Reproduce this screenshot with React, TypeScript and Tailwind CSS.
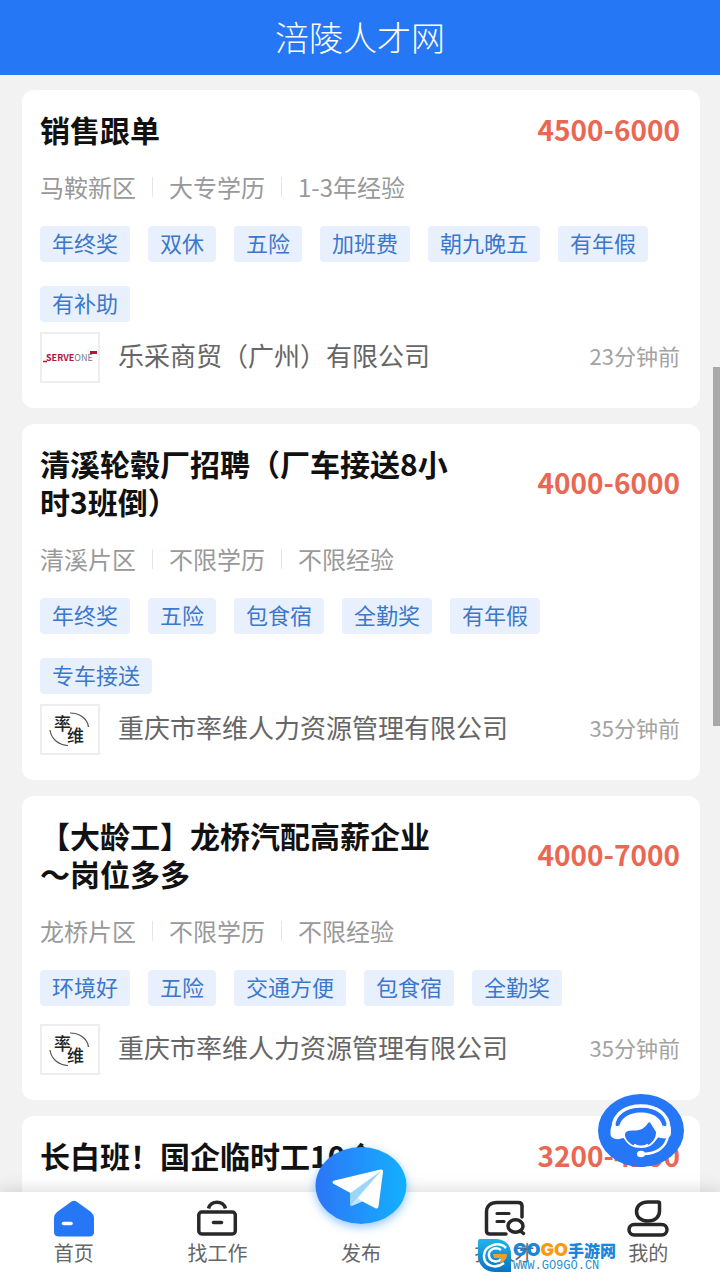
import type { ReactNode } from 'react';

interface Job {
  title: string;
  salary: string;
  meta: string[];
  tags: string[];
  company?: string;
  logo?: 'serveone' | 'shuaiwei';
  time?: string;
}

const jobs: Job[] = [
  {
    title: '销售跟单',
    salary: '4500-6000',
    meta: ['马鞍新区', '大专学历', '1-3年经验'],
    tags: ['年终奖', '双休', '五险', '加班费', '朝九晚五', '有年假', '有补助'],
    company: '乐采商贸（广州）有限公司',
    logo: 'serveone',
    time: '23分钟前',
  },
  {
    title: '清溪轮毂厂招聘（厂车接送8小时3班倒）',
    salary: '4000-6000',
    meta: ['清溪片区', '不限学历', '不限经验'],
    tags: ['年终奖', '五险', '包食宿', '全勤奖', '有年假', '专车接送'],
    company: '重庆市率维人力资源管理有限公司',
    logo: 'shuaiwei',
    time: '35分钟前',
  },
  {
    title: '【大龄工】龙桥汽配高薪企业～岗位多多',
    salary: '4000-7000',
    meta: ['龙桥片区', '不限学历', '不限经验'],
    tags: ['环境好', '五险', '交通方便', '包食宿', '全勤奖'],
    company: '重庆市率维人力资源管理有限公司',
    logo: 'shuaiwei',
    time: '35分钟前',
  },
  {
    title: '长白班！国企临时工10个',
    salary: '3200-4200',
    meta: [],
    tags: [],
  },
];

function ServeOneLogo() {
  return (
    <svg viewBox="0 0 56 47" className="h-full w-full" role="img" aria-label="SERVEONE">
      <path d="M1 27.500H5" fill="none" stroke="#b5123e" strokeWidth="1.500" />
      <text x="4" y="27" fontSize="9" fontFamily="Noto Sans CJK SC, sans-serif">
        <tspan fill="#b5123e" fontWeight="700">SERVE</tspan>
        <tspan fill="#777">ONE</tspan>
      </text>
      <path d="M48 17h7v3h-7z" fill="#b5123e" />
    </svg>
  );
}

function ShuaiweiLogo() {
  return (
    <svg viewBox="0 0 56 47" className="h-full w-full" role="img" aria-label="率维">
      <g fill="none" stroke="#555" strokeWidth="1.200">
        <path d="M28 7C38 7 45.500 13 46.500 21" />
        <path d="M8 24C9 33 17 39 26 39.500" />
      </g>
      <g fill="#222" fontSize="17" fontWeight="500" fontFamily="Noto Sans CJK SC, sans-serif">
        <text x="12" y="24">率</text>
        <text x="25" y="36">维</text>
      </g>
    </svg>
  );
}

function JobCard({ job }: { job: Job }) {
  // a second row of tags eats into the space above the company line
  const footerGap = job.tags.length > 5 ? 'mt-[10px]' : 'mt-[18px]';

  return (
    <article className="rounded-xl bg-white pt-5 pr-5 pb-[25px] pl-[18px]">
      <div className="flex items-center justify-between">
        <h2 className="w-[65%] text-[30px] leading-[38px] font-bold text-[#111]">{job.title}</h2>
        <span className="text-[28px] leading-[38px] font-bold text-[#ea6853]">{job.salary}</span>
      </div>
      <div className="mt-[23px] flex h-8 items-center text-[24px] leading-8 text-[#999]">
        {job.meta.map((item, i) => (
          <div key={item} className="flex items-center">
            {i > 0 && <span className="mx-4 h-5 w-px bg-[#e6e6e6]" />}
            <span>{item}</span>
          </div>
        ))}
      </div>
      {job.tags.length > 0 && (
        <ul className="mt-[23px] flex flex-wrap gap-x-[18px] gap-y-6 pr-4">
          {job.tags.map((tag) => (
            <li key={tag} className="rounded bg-[#e9f0fd] px-3 pb-1 text-[22px] leading-8 text-[#3b78cc]">
              {tag}
            </li>
          ))}
        </ul>
      )}
      {job.company && (
        <div className={`flex items-center ${footerGap}`}>
          <div className="h-[51px] w-[60px] shrink-0 border-2 border-[#eee] bg-white">
            {job.logo === 'serveone' ? <ServeOneLogo /> : <ShuaiweiLogo />}
          </div>
          <span className="ml-[18px] pb-1.5 text-[26px] leading-9 text-[#666]">{job.company}</span>
          <time className="ml-auto pb-1.5 text-[22px] leading-8 text-[#a3a3a3]">{job.time}</time>
        </div>
      )}
    </article>
  );
}

function HomeIcon() {
  return (
    <svg viewBox="0 0 42 37" className="h-[37px] w-[42px]">
      <path
        d="M18.500 1.500Q21 0 23.500 1.500L38 12Q41 14.500 41 18V32Q41 36.500 36 36.500H6Q1 36.500 1 32V18Q1 14.500 4 12Z"
        fill="#2577f5"
      />
      <path d="M10.500 23.500H18" stroke="#fff" strokeWidth="3.600" strokeLinecap="round" />
    </svg>
  );
}

function WorkIcon() {
  return (
    <svg viewBox="0 0 42 37" className="h-[37px] w-[42px]" fill="none" stroke="#282828" strokeWidth="3.500">
      <rect x="2.800" y="12" width="36.500" height="22" rx="3" />
      <path d="M12.500 8.500C14.500 0 27.500 0 29.500 8.500" />
      <path d="M17.500 22.500H25.500" strokeLinecap="round" />
    </svg>
  );
}

function TalentIcon() {
  return (
    <svg viewBox="0 0 42 37" className="h-[37px] w-[42px]" fill="none" stroke="#282828" strokeWidth="3.500" strokeLinecap="round">
      <path d="M22 34H6Q2.500 34 2.500 31V12C2.500 5.500 7 2.500 13 2.500H34Q38 2.500 38 6V17" />
      <path d="M13 13.500H25M13 21.500H20" strokeWidth="3.200" />
      <ellipse cx="31.500" cy="26" rx="7.500" ry="6.300" />
      <path d="M36.500 31L39.500 33.500" />
    </svg>
  );
}

function MineIcon() {
  return (
    <svg viewBox="0 0 42 37" className="h-[37px] w-[42px]" fill="none" stroke="#282828" strokeWidth="3.500">
      <path d="M21 2H31Q32.500 2 32.500 3.500V11C32.500 17 28 21 21 21C14 21 9.500 17 9.500 11.500C9.500 6 14 2 21 2Z" />
      <rect x="2" y="24.500" width="38" height="10.500" rx="5.200" />
    </svg>
  );
}

function PlaneIcon() {
  return (
    <svg viewBox="0 0 91 77" className="h-full w-full">
      <path d="M17.500 36.500Q16 34.500 19 33.500L65 22.500Q68 22 67.500 25L63 59.500Q62.500 62.500 59.500 61L46 54L35 58.500V46Z" fill="#fff" />
      <path d="M35 46L66 23.500L42 51L35 59Z" fill="#9bd6f8" />
      <path d="M42 51L35 59.500L47 54.500Z" fill="#bfe5fb" />
    </svg>
  );
}

function ServiceIcon() {
  return (
    <svg viewBox="0 0 86 73" className="h-full w-full">
      <path d="M15 34C16 19 28 12 43 12C58 12 70 19 71 34" fill="none" stroke="#fff" strokeWidth="3.500" />
      <path
        d="M21 38C20 25 30 18.500 43 18.500C56 18.500 66 25 65 38L58 46C55 51 50 54 43 54C35 54 30 51 27 46Z"
        fill="#fff"
      />
      <path d="M12.500 37C12.500 32 16 29 21 31L27 43C20 47 12.500 45 12.500 40Z" fill="#fff" />
      <path d="M73 36C73 32 70 29 65 31L60 43C67 46 73 44 73 39Z" fill="#fff" />
      <path
        d="M27 41C27 37 31 36.500 36 36.500C43 36.500 47 34 50 29Q52 27 53 30L58 38C58 44 55 48 51 50.500Q49 52 43 52Q36 52 33 50C29 47 27 44 27 41Z"
        fill="#2577f5"
      />
      <path d="M19 32C22 20 32 15.500 43 15.500C54 15.500 64 20 67 32" fill="none" stroke="#2577f5" strokeWidth="3" />
      <path d="M36 50.500Q43 54.500 50 50.500" fill="none" stroke="#fff" strokeWidth="2" />
      <path d="M70 42C68 53 59 60 45 60" fill="none" stroke="#fff" strokeWidth="2.500" />
      <ellipse cx="43" cy="60" rx="4" ry="3.200" fill="#fff" />
    </svg>
  );
}

function NavItem({ label, children }: { label: string; children: ReactNode }) {
  return (
    <a href="#" className="flex flex-col items-center pt-2">
      {children}
      <span className="mt-1 text-[20px] leading-6 text-[#666]">{label}</span>
    </a>
  );
}

function SiteBadge() {
  return (
    <div className="absolute right-[104px] bottom-2 flex items-center gap-0.5">
      <svg viewBox="0 0 33 33" className="h-[33px] w-[33px]">
        <defs>
          <linearGradient id="badge" x1="0" y1="0" x2="0" y2="1">
            <stop offset="0" stopColor="#22b4ec" />
            <stop offset="1" stopColor="#0872c4" />
          </linearGradient>
        </defs>
        <path d="M2 0H18C27 0 33 6 33 15V33H17C7 33 0 26 0 16V2Q0 0 2 0Z" fill="url(#badge)" />
        <path d="M28 9C21 2 7 6 6 16C5 26 17 31 26 24" fill="none" stroke="#fff" strokeWidth="2.500" />
        <path d="M23 11C17 7 10 11 11 17C12 23 20 24 23 20" fill="none" stroke="#fff" strokeWidth="2.500" />
        <path d="M15 15H29C29 20 26 23 22 24L23 19H16Z" fill="#f99d1c" />
      </svg>
      <div className="flex flex-col">
        <div className="flex items-center text-[18px] leading-5 font-black text-[#1687d9]">
          <span className="font-['Inter']">GO</span>
          <span className="font-['Inter'] text-[#fb9a12]">GO</span>
          <span className="text-[16px]">手游网</span>
        </div>
        <span className="font-['Liberation_Mono'] text-[12px] leading-3 text-[#2b8fce]">WWW.GO9GO.CN</span>
      </div>
    </div>
  );
}

export default function App() {
  return (
    <div
      lang="zh-CN"
      className="relative flex h-screen flex-col overflow-hidden bg-[#f2f2f2] font-['Noto_Sans_CJK_SC',sans-serif]"
    >
      <header className="flex h-[75px] shrink-0 items-center justify-center bg-[#2577f5] pb-0.5">
        <h1 className="text-[34px] leading-10 font-light text-white">涪陵人才网</h1>
      </header>

      <main className="flex min-h-0 flex-1 flex-col gap-4 overflow-hidden pt-[15px] pr-5 pl-[22px]">
        {jobs.map((job) => (
          <JobCard key={job.title} job={job} />
        ))}
      </main>

      <nav className="relative grid h-[88px] shrink-0 grid-cols-5 bg-white pl-0.5 shadow-[0_-2px_16px_rgba(0,0,0,0.15)]">
        <NavItem label="首页">
          <HomeIcon />
        </NavItem>
        <NavItem label="找工作">
          <WorkIcon />
        </NavItem>
        <NavItem label="发布">
          <span className="relative h-[37px] w-[42px]">
            <span className="absolute bottom-[13px] left-1/2 h-[77px] w-[91px] -translate-x-1/2 rounded-[50%] bg-linear-to-r from-[#2b75f6] to-[#12b0ff] shadow-[0_3px_10px_rgba(30,144,255,0.5)]">
              <PlaneIcon />
            </span>
          </span>
        </NavItem>
        <NavItem label="找人才">
          <TalentIcon />
        </NavItem>
        <NavItem label="我的">
          <MineIcon />
        </NavItem>
        <SiteBadge />
      </nav>

      <button
        type="button"
        aria-label="在线客服"
        className="absolute right-9 bottom-[113px] h-[73px] w-[86px] rounded-[50%] bg-[#2577f5]"
      >
        <ServiceIcon />
      </button>

      <div className="absolute top-[367px] right-0 h-[359px] w-[7px] bg-[#a9a9a9]" />
    </div>
  );
}
